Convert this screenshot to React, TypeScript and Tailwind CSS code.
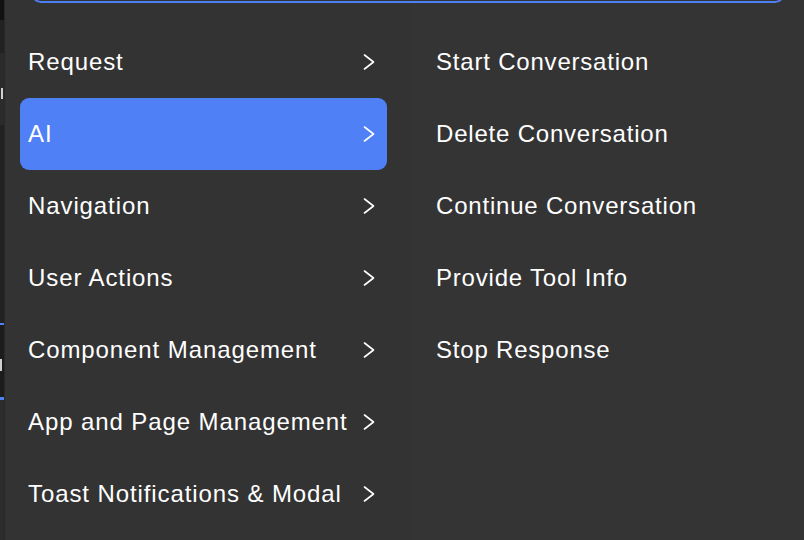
const groups = [
  "Request",
  "AI",
  "Navigation",
  "User Actions",
  "Component Management",
  "App and Page Management",
  "Toast Notifications & Modal",
];

const aiActions = [
  "Start Conversation",
  "Delete Conversation",
  "Continue Conversation",
  "Provide Tool Info",
  "Stop Response",
];

function Chevron() {
  return (
    <svg width="12" height="16" viewBox="0 0 12 16" fill="none" className="shrink-0">
      <path d="M1.5 1 L10.5 8 L1.5 15" stroke="white" strokeWidth="1.6" strokeLinecap="round" strokeLinejoin="round" />
    </svg>
  );
}

export default function App() {
  return (
    <div
      className="relative flex w-[804px] h-[540px] overflow-hidden bg-[#1e1e1e] text-white"
      style={{ fontFamily: "'Liberation Sans', Arial, sans-serif" }}
    >
      {/* sliver of the page behind the menu */}
      <div className="flex flex-col w-[4px] shrink-0">
        <div className="h-[20px] bg-[#111111]" />
        <div className="h-[33px] bg-[#222222]" />
        <div className="relative h-[72px] bg-[#2b2b2b]">
          <div className="absolute top-[35px] left-[1px] w-[2px] h-[11px] bg-[#cfcfcf]" />
        </div>
        <div className="h-[198px] bg-[#222222]" />
        <div className="h-[2px] bg-[#4f7ff5]" />
        <div className="relative h-[72px] bg-[#1c1c1c]">
          <div className="absolute top-[34px] left-0 w-[2px] h-[12px] bg-[#cfcfcf]" />
        </div>
        <div className="h-[3px] bg-[#4f7ff5]" />
        <div className="flex-1 bg-[#2d2d2d]" />
      </div>

      {/* the menu */}
      <div className="relative flex flex-1 border-l border-[#282828]">
        {/* bottom edge of the search field above */}
        <div className="absolute left-[26px] right-[19px] top-[-40px] h-[43px] rounded-[10px] border-2 border-[#4f7ff5]" />

        <div className="flex flex-col w-[406px] shrink-0 bg-[#333333] pt-[26px] pl-[15px] pr-[24px]">
          {groups.map((g) => (
            <div
              key={g}
              className={
                g === "AI"
                  ? "flex items-center justify-between h-[72px] pl-[8px] pr-[12px] rounded-[9px] bg-[#4f80f6]"
                  : "flex items-center justify-between h-[72px] pl-[8px] pr-[12px] rounded-[9px]"
              }
            >
              <span className="text-[24px] tracking-[0.9px] whitespace-nowrap">{g}</span>
              <Chevron />
            </div>
          ))}
        </div>

        <div className="flex flex-col flex-1 bg-[#343434] pt-[26px] pl-[25px]">
          {aiActions.map((a) => (
            <div key={a} className="flex items-center h-[72px]">
              <span className="text-[24px] tracking-[0.8px] whitespace-nowrap">{a}</span>
            </div>
          ))}
        </div>
      </div>
    </div>
  );
}
